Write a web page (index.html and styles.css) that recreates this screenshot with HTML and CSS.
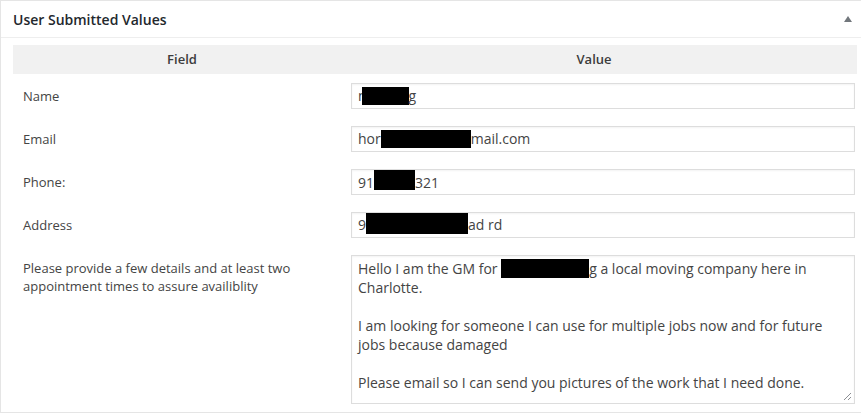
FILE: index.html
```html
<!DOCTYPE html>
<html lang="en">
<head>
    <meta charset="UTF-8">
    <meta name="viewport" content="width=device-width, initial-scale=1.0">
    <title>User Submitted Values</title>
    <link rel="stylesheet" href="styles.css">
</head>
<body>
    <div class="postbox">
        <div class="postbox-header">
            <h2>User Submitted Values</h2>
            <svg class="toggle" width="8" height="6" viewBox="0 0 8 6"><polygon points="4,0 8,6 0,6" fill="#72777c"/></svg>
        </div>

        <div class="inside">
            <div class="values">
                <div class="head">Field</div>
                <div class="head head-value">Value</div>

                <div class="label">Name</div>
                <div class="field">n<span class="redact r-name"></span>g</div>

                <div class="label">Email</div>
                <div class="field">hor<span class="redact r-email"></span>mail.com</div>

                <div class="label">Phone:</div>
                <div class="field">91<span class="redact r-phone"></span>321</div>

                <div class="label">Address</div>
                <div class="field">9<span class="redact r-address"></span>ad rd</div>

                <div class="label label-top">Please provide a few details and at least two appointment times to assure availiblity</div>
                <div class="field area">
                    Hello I am the GM for <span class="redact r-company"></span>g a local moving company here in<br>
                    Charlotte.<br>
                    <br>
                    I am looking for someone I can use for multiple jobs now and for future<br>
                    jobs because damaged<br>
                    <br>
                    Please email so I can send you pictures of the work that I need done.
                    <svg class="grip" width="9" height="9" viewBox="0 0 9 9"><path d="M1 8 L8 1 M5 8 L8 5" stroke="#8c8f94" stroke-width="1"/></svg>
                </div>
            </div>
        </div>
    </div>
</body>
</html>
```

FILE: styles.css
```css
body {
    margin: 0;
    padding: 0;
    background-color: #ffffff;
    font-family: 'Open Sans', 'Noto Sans', sans-serif;
    color: #444;
    overflow: hidden;
}

.postbox {
    width: 880px;
    border: 1px solid #e5e5e5;
    background-color: #fff;
}

.postbox-header {
    height: 36px;
    border-bottom: 1px solid #eeeeee;
    display: flex;
    align-items: center;
    justify-content: space-between;
    padding: 0 12px 0 12px;
}

.postbox-header h2 {
    margin: 0;
    font-size: 14px;
    font-weight: 600;
    color: #23282d;
}

.toggle {
    margin-right: 17px;
    margin-top: -1px;
}

.inside {
    padding: 7px 11px 0 12px;
}

.values {
    width: 844px;
    display: grid;
    grid-template-columns: 338px 506px;
    align-items: center;
}

.head {
    height: 29px;
    line-height: 28px;
    background-color: #f1f1f1;
    text-align: center;
    font-size: 13px;
    font-weight: 600;
    color: #3c3c3c;
}

.head-value {
    padding-right: 20px;
}

.label {
    padding-left: 10px;
    font-size: 13px;
    line-height: 18px;
    color: #444;
}

.label-top {
    align-self: start;
    padding-top: 4px;
    padding-right: 20px;
    margin-top: 9px;
}

.field {
    width: 504px;
    box-sizing: border-box;
    height: 26px;
    margin: 9px 0 8px 0;
    padding: 0 6px;
    border: 1px solid #dddddd;
    box-shadow: inset 0 1px 2px rgba(0, 0, 0, 0.05);
    font-size: 14px;
    line-height: 24px;
    color: #444;
    white-space: nowrap;
}

.area {
    position: relative;
    height: 149px;
    padding: 3px 6px;
    line-height: 19px;
}

.redact {
    display: inline-block;
    background-color: #000;
    vertical-align: -4px;
}

.r-name {
    width: 47px;
    height: 18px;
    margin-left: -5px;
}

.r-email {
    width: 90px;
    height: 18px;
}

.r-phone {
    width: 41px;
    height: 20px;
    vertical-align: -2px;
}

.r-address {
    width: 102px;
    height: 21px;
    vertical-align: -4px;
}

.r-company {
    width: 88px;
    height: 19px;
}

.grip {
    position: absolute;
    right: 2px;
    bottom: 2px;
}
```
